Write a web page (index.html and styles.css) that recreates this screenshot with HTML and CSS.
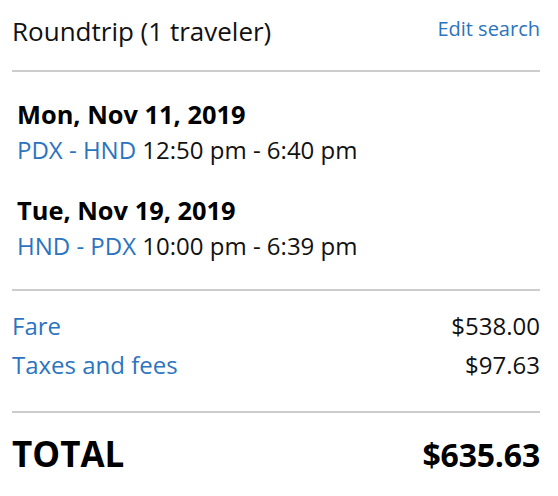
FILE: index.html
```html
<!DOCTYPE html>
<html>
<head>
<meta charset="utf-8">
<link rel="stylesheet" href="styles.css">
</head>
<body>
<div class="summary">
  <div class="header">
    <div class="title">Roundtrip (1 traveler)</div>
    <a class="edit" href="#">Edit search</a>
  </div>
  <div class="divider"></div>
  <div class="trips">
    <div class="trip">
      <div class="date">Mon, Nov 11, 2019</div>
      <div class="route"><span class="link">PDX - HND</span> 12:50 pm - 6:40 pm</div>
    </div>
    <div class="trip">
      <div class="date">Tue, Nov 19, 2019</div>
      <div class="route"><span class="link">HND - PDX</span> 10:00 pm - 6:39 pm</div>
    </div>
  </div>
  <div class="divider"></div>
  <div class="charges">
    <div class="row"><span class="link">Fare</span><span>$538.00</span></div>
    <div class="row"><span class="link">Taxes and fees</span><span>$97.63</span></div>
  </div>
  <div class="divider"></div>
  <div class="total"><span class="total-label">TOTAL</span><span class="total-amount">$635.63</span></div>
</div>
</body>
</html>
```
FILE: styles.css
```css
html, body {
  margin: 0;
  padding: 0;
  background: #fff;
}
body {
  font-family: "Open Sans", "Noto Sans", sans-serif;
  color: #000;
}
.summary {
  width: 528px;
  padding: 15px 0 0 12px;
}
.header {
  display: flex;
  justify-content: space-between;
  align-items: flex-start;
  margin-bottom: 24px;
}
.title {
  font-size: 26px;
  line-height: 30px;
  margin-top: 1px;
  color: #111;
}
.edit {
  font-size: 20px;
  line-height: 28px;
  color: #2b74c0;
  text-decoration: none;
}
.divider {
  height: 2px;
  background: #cccccc;
}
.trips {
  padding: 24px 0 25px 5px;
  display: flex;
  flex-direction: column;
  gap: 24px;
}
.date {
  font-weight: 700;
  font-size: 25.4px;
  line-height: 36px;
}
.route {
  font-size: 24px;
  line-height: 36px;
  color: #111;
}
.link {
  color: #2b74c0;
}
.charges {
  padding: 15px 0 27px;
}
.row {
  display: flex;
  justify-content: space-between;
  font-size: 24px;
  line-height: 39px;
  color: #111;
}
.total {
  display: flex;
  justify-content: space-between;
  align-items: baseline;
  font-weight: 700;
  line-height: 40px;
  padding-top: 21px;
}
.total-label {
  font-size: 35px;
}
.total-amount {
  font-size: 32px;
  letter-spacing: -0.2px;
}
```
